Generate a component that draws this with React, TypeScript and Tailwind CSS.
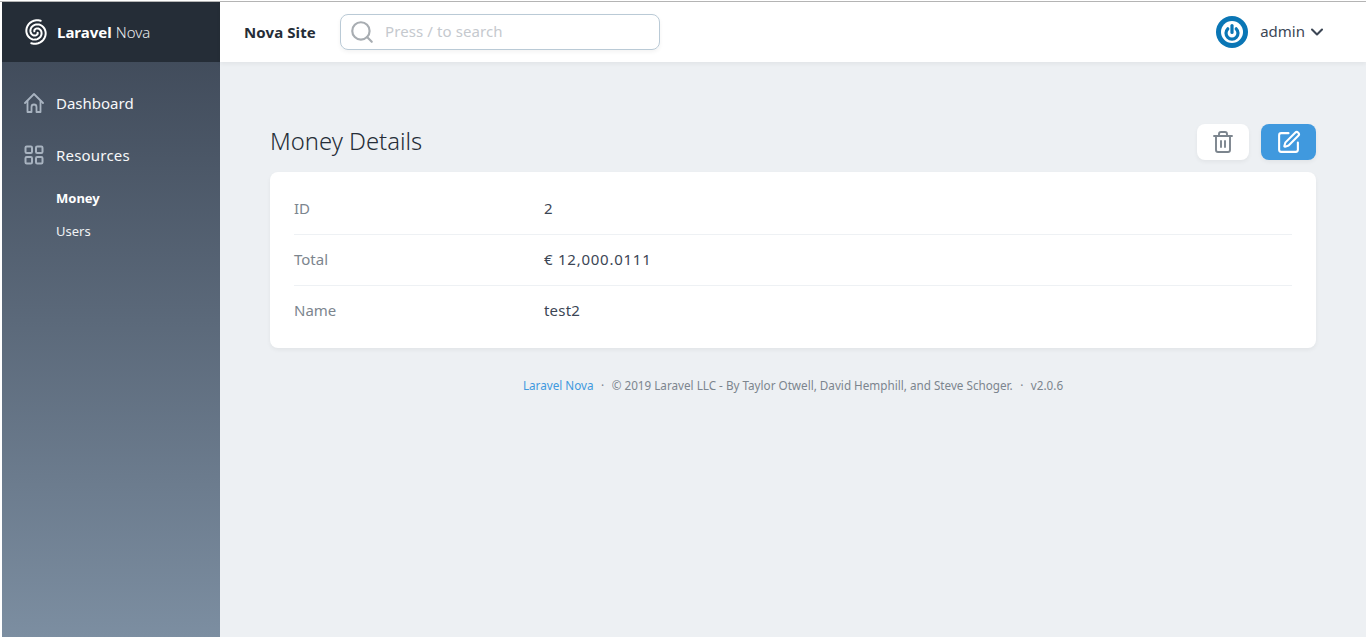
import { ChevronDown, Search, SquarePen, Trash2 } from "lucide-react";

const rows = [
  { label: "ID", value: "2", tracking: "" },
  { label: "Total", value: "€ 12,000.0111", tracking: "tracking-[0.75px]" },
  { label: "Name", value: "test2", tracking: "tracking-[0.2px]" },
];

// one arm of the two-armed spiral, from the middle outwards
function spiralArm(start: number) {
  const points: string[] = [];
  for (let i = 0; i <= 40; i++) {
    const t = i / 40;
    const angle = start + t * Math.PI * 2.5;
    const r = 1.8 + t * 10.4;
    points.push(`${(12 + r * Math.cos(angle)).toFixed(2)} ${(12 + r * Math.sin(angle)).toFixed(2)}`);
  }
  return "M" + points.join("L");
}

function NovaLogo() {
  return (
    <svg width="24" height="24" viewBox="0 0 24 24" fill="none" stroke="white" strokeWidth="2" strokeLinecap="round" className="overflow-visible">
      <path d={spiralArm(0.4)} />
      <path d={spiralArm(0.4 + Math.PI)} />
    </svg>
  );
}

function HomeIcon() {
  return (
    <svg width="20" height="20" viewBox="0 0 20 20" fill="none" stroke="#a8b3c0" strokeWidth="1.8" strokeLinecap="round" strokeLinejoin="round">
      <path d="M1 10 10 1l9 9" />
      <path d="M3.5 8v11h4v-5a2.5 2.5 0 0 1 5 0v5h4V8" />
    </svg>
  );
}

function GridIcon() {
  return (
    <svg width="20" height="20" viewBox="0 0 20 20" fill="none" stroke="#a8b3c0" strokeWidth="2">
      <rect x="1.5" y="1.5" width="6.5" height="6.5" rx="1.2" />
      <rect x="12" y="1.5" width="6.5" height="6.5" rx="1.2" />
      <rect x="1.5" y="12" width="6.5" height="6.5" rx="1.2" />
      <rect x="12" y="12" width="6.5" height="6.5" rx="1.2" />
    </svg>
  );
}

function Avatar() {
  return (
    <svg width="32" height="32" viewBox="0 0 32 32" fill="none">
      <circle cx="16" cy="16" r="16" fill="#0a76b5" />
      <circle cx="16" cy="16" r="11" fill="white" />
      <path d="M11.8 12.8a6 6 0 1 0 8.4 0" stroke="#0a76b5" strokeWidth="3.2" strokeLinecap="round" />
      <path d="M16 9.5v7" stroke="#0a76b5" strokeWidth="3.2" strokeLinecap="round" />
    </svg>
  );
}

export default function App() {
  return (
    <div className="h-[640px] overflow-hidden bg-white pl-[2px] font-['Noto_Sans',sans-serif]">
      <div className="h-[1px] -ml-[2px] mt-[1px] bg-[#b5b5b5]" />
      <div className="flex h-[635px]">
        {/* Sidebar */}
        <aside className="flex w-[218px] shrink-0 flex-col bg-gradient-to-b from-[#3c4655] to-[#7c8ea1]">
          <div className="flex h-[60px] items-center bg-[#252d37] pl-[22px] text-white">
            <NovaLogo />
            <span className="ml-[9px] text-[15px] font-bold">Laravel</span>
            <span className="ml-[4px] text-[15px] font-light text-[#e8ebee]">Nova</span>
          </div>
          <nav className="pl-[22px] text-[#f7f8f9]">
            <div className="mt-[29px] flex h-[24px] items-center">
              <span className="w-[32px]">
                <HomeIcon />
              </span>
              <span className="text-[15px]">Dashboard</span>
            </div>
            <div className="mt-[28px] flex h-[24px] items-center">
              <span className="w-[32px]">
                <GridIcon />
              </span>
              <span className="text-[15px] tracking-[0.2px]">Resources</span>
            </div>
            <div className="mt-[22px] pl-[32px] text-[13px] leading-[18px]">
              <div className="font-bold text-white">Money</div>
              <div className="mt-[15px] text-[#f0f2f4]">Users</div>
            </div>
          </nav>
        </aside>

        <div className="flex min-w-0 flex-1 flex-col bg-[#edf0f3]">
          {/* Top bar */}
          <header className="flex h-[60px] items-center bg-white pl-[24px] pr-[39px] shadow-[0_2px_4px_rgba(0,0,0,0.05)]">
            <span className="w-[96px] text-[15px] font-bold tracking-[0.1px] text-[#252d37]">Nova Site</span>
            <div className="flex h-[36px] w-[320px] items-center rounded-[8px] border border-[#bacad6] pl-[8px] shadow-[0_2px_4px_rgba(0,0,0,0.05)]">
              <Search size={26} strokeWidth={2} className="text-[#a8adb2]" />
              <span className="mb-[2px] ml-[10px] text-[15px] tracking-[0.1px] text-[#c5c9ce]">Press / to search</span>
            </div>
            <div className="ml-auto flex items-center">
              <Avatar />
              <span className="mb-[1px] ml-[12px] text-[15px] text-[#3c4655]">admin</span>
              <ChevronDown size={20} strokeWidth={2.5} className="ml-[2px] text-[#3c4655]" />
            </div>
          </header>

          {/* Content */}
          <main className="px-[50px] pt-[62px]">
            <div className="flex h-[36px] items-center justify-between">
              <h1 className="text-[23.8px] font-light text-[#252d37]">Money Details</h1>
              <div className="flex gap-[12px]">
                <button className="flex h-[36px] w-[52px] items-center justify-center rounded-[8px] bg-white shadow-[0_2px_4px_rgba(0,0,0,0.05)]">
                  <Trash2 size={24} strokeWidth={1.9} className="text-[#7c858e]" />
                </button>
                <button className="flex h-[36px] w-[55px] items-center justify-center rounded-[8px] bg-[#4099de] shadow-[0_2px_4px_rgba(0,0,0,0.05)]">
                  <SquarePen size={25} strokeWidth={2} className="text-white" />
                </button>
              </div>
            </div>
            <section className="mt-[12px] rounded-[8px] bg-white px-[24px] pb-[11px] pt-[12px] shadow-[0_2px_4px_rgba(0,0,0,0.05)]">
              {rows.map((row, i) => (
                <div key={row.label} className={`flex h-[51px] items-center pb-[2px] text-[15px] ${i < rows.length - 1 ? "border-b border-[#eef1f4]" : ""}`}>
                  <span className="w-[250px] text-[#7c858e]">{row.label}</span>
                  <span className={`text-[#3c4655] ${row.tracking}`}>{row.value}</span>
                </div>
              ))}
            </section>
            <p className="mt-[29px] text-center text-[11.7px] text-[#7c858e]">
              <span className="text-[#4099de]">Laravel Nova</span>
              <span className="mx-[7.5px]">·</span>© 2019 Laravel LLC - By Taylor Otwell, David Hemphill, and Steve Schoger.
              <span className="mx-[7.5px]">·</span>v2.0.6
            </p>
          </main>
        </div>
      </div>
    </div>
  );
}
